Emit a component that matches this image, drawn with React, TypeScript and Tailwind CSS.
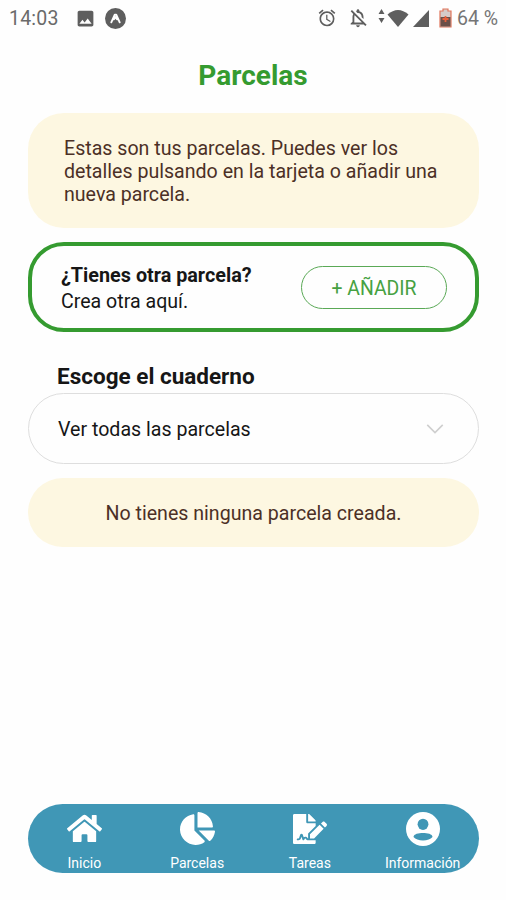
import React from 'react';
import { FaHome, FaChartPie, FaFileSignature } from 'react-icons/fa';
import { MdAlarm, MdImage, MdOutlineNotificationsOff } from 'react-icons/md';

interface Tab {
  label: string;
  icon: React.ReactNode;
}

const ProfileIcon: React.FC = () => (
  <svg width="34" height="34" viewBox="0 0 34 34">
    <circle cx="17" cy="17" r="17" fill="white" />
    <ellipse cx="17" cy="12.3" rx="5.4" ry="5.6" fill="#4097b6" />
    <path d="M7.5 25c0-3.2 5.2-4.1 9.5-4.1s9.5.9 9.5 4.1c-2 2.2-5.2 3.5-9.5 3.5S9.5 27.2 7.5 25z" fill="#4097b6" />
  </svg>
);

const tabs: Tab[] = [
  { label: 'Inicio', icon: <FaHome size={35} /> },
  { label: 'Parcelas', icon: <FaChartPie size={35} /> },
  { label: 'Tareas', icon: <FaFileSignature size={34} /> },
  { label: 'Información', icon: <ProfileIcon /> },
];

const StatusBar: React.FC = () => (
  <div className="flex h-9 items-center justify-between pr-2 pl-[9px] text-[#5e5e5e]">
    <div className="flex items-center">
      <span className="w-[66px] pt-0.5 text-[19.5px] tracking-[0.2px] text-[#6a6a6a]">14:03</span>
      <MdImage size={21} className="mr-[9px]" />
      <svg width="21" height="21" viewBox="0 0 20 20">
        <circle cx="10" cy="10" r="10" fill="currentColor" />
        <path d="M6 13.6 9.3 6.4h1.4L14 13.6M8.600 10.800 10 8.600l1.400 2.200" fill="none" stroke="white" strokeWidth="1.8" strokeLinecap="round" strokeLinejoin="round" />
      </svg>
    </div>
    <div className="flex items-center">
      <MdAlarm size={20} className="mr-[10px]" />
      <MdOutlineNotificationsOff size={22} className="mr-[9px]" />
      <svg width="7" height="14" viewBox="0 0 7 14" fill="currentColor" className="mr-0.5 mb-1">
        <path d="M3.5 0 6.5 5h-6zM3.5 14l-3-5h6z" />
      </svg>
      <svg width="22" height="17" viewBox="0 0 21 17" fill="currentColor" className="mr-1">
        <path d="M0 4.500Q10.500-4.500 21 4.500L10.500 17z" />
      </svg>
      <svg width="16" height="17" viewBox="0 0 16 17" fill="currentColor" className="mr-[10px]">
        <path d="M16 0v17H0z" />
      </svg>
      <svg width="13" height="20" viewBox="0 0 13 20" className="mr-[5px]">
        <path d="M1 3h3V1h5v2h3v16H1z" fill="#d5cbc8" stroke="#e0755a" strokeWidth="1.2" />
        <path d="M1.500 9h10v9.500h-10z" fill="#6b5049" />
        <path d="M6.500 8v6M3.500 11h6" stroke="#e8603c" strokeWidth="1.800" />
      </svg>
      <span className="pt-0.5 text-[19.5px] text-[#757575]">64 %</span>
    </div>
  </div>
);

const TabBar: React.FC = () => (
  <nav className="mx-7 mt-auto mb-[27px] grid h-[69px] w-[451px] shrink-0 grid-cols-4 overflow-hidden rounded-full bg-[#4097b6] text-white">
    {tabs.map(tab => (
      <div key={tab.label} className="flex flex-col items-center">
        <div className="mt-[7px] flex h-[35px] items-center justify-center">{tab.icon}</div>
        <span className="mt-[9px] text-[14px] leading-4">{tab.label}</span>
      </div>
    ))}
  </nav>
);

const App: React.FC = () => {
  return (
    <div className="flex h-[900px] w-[506px] flex-col bg-[#fefefe] font-[Roboto,sans-serif] text-[#161616]">
      <StatusBar />
      <h1 className="mt-[23px] text-center text-[28px] leading-[34px] font-bold text-[#359b30]">Parcelas</h1>

      <main className="mx-7 mt-5 w-[451px]">
        <p className="h-[115px] rounded-[36px] bg-[#fdf7e1] pt-6 pr-8 pl-9 text-[19.6px] leading-[23px] text-[#4c3026]">
          Estas son tus parcelas. Puedes ver los detalles pulsando en la tarjeta o añadir una nueva parcela.
        </p>

        <section className="mt-[14px] flex h-[90px] items-center justify-between rounded-[36px] border-4 border-[#359b30] pr-7 pl-[29px]">
          <div className="pt-[3px] leading-[26px]">
            <h2 className="text-[19.8px] font-bold">¿Tienes otra parcela?</h2>
            <p className="text-[19.6px]">Crea otra aquí.</p>
          </div>
          <button className="h-[43px] w-[146px] rounded-full border-[1.5px] border-[#5aa956] pt-[3px] text-[19.4px] text-[#46a142]">
            + AÑADIR
          </button>
        </section>

        <h2 className="mt-[30px] pl-[29px] text-[22.5px] leading-[28px] font-bold">Escoge el cuaderno</h2>
        <div className="mt-[3px] flex h-[71px] items-center justify-between rounded-full border-[1.5px] border-[#dedede] pr-[34px] pl-[29px] text-[19.6px]">
          <span className="pt-[3px]">Ver todas las parcelas</span>
          <svg width="18" height="10" viewBox="0 0 19 11" fill="none" stroke="#cfcfcf" strokeWidth="1.8">
            <path d="M1 1l8.5 8.5L18 1" />
          </svg>
        </div>

        <p className="mt-[14px] flex h-[69px] items-center justify-center rounded-full bg-[#fdf7e1] pt-[3px] text-[19.6px] text-[#4c3026]">
          No tienes ninguna parcela creada.
        </p>
      </main>

      <TabBar />
    </div>
  );
};

export default App;
